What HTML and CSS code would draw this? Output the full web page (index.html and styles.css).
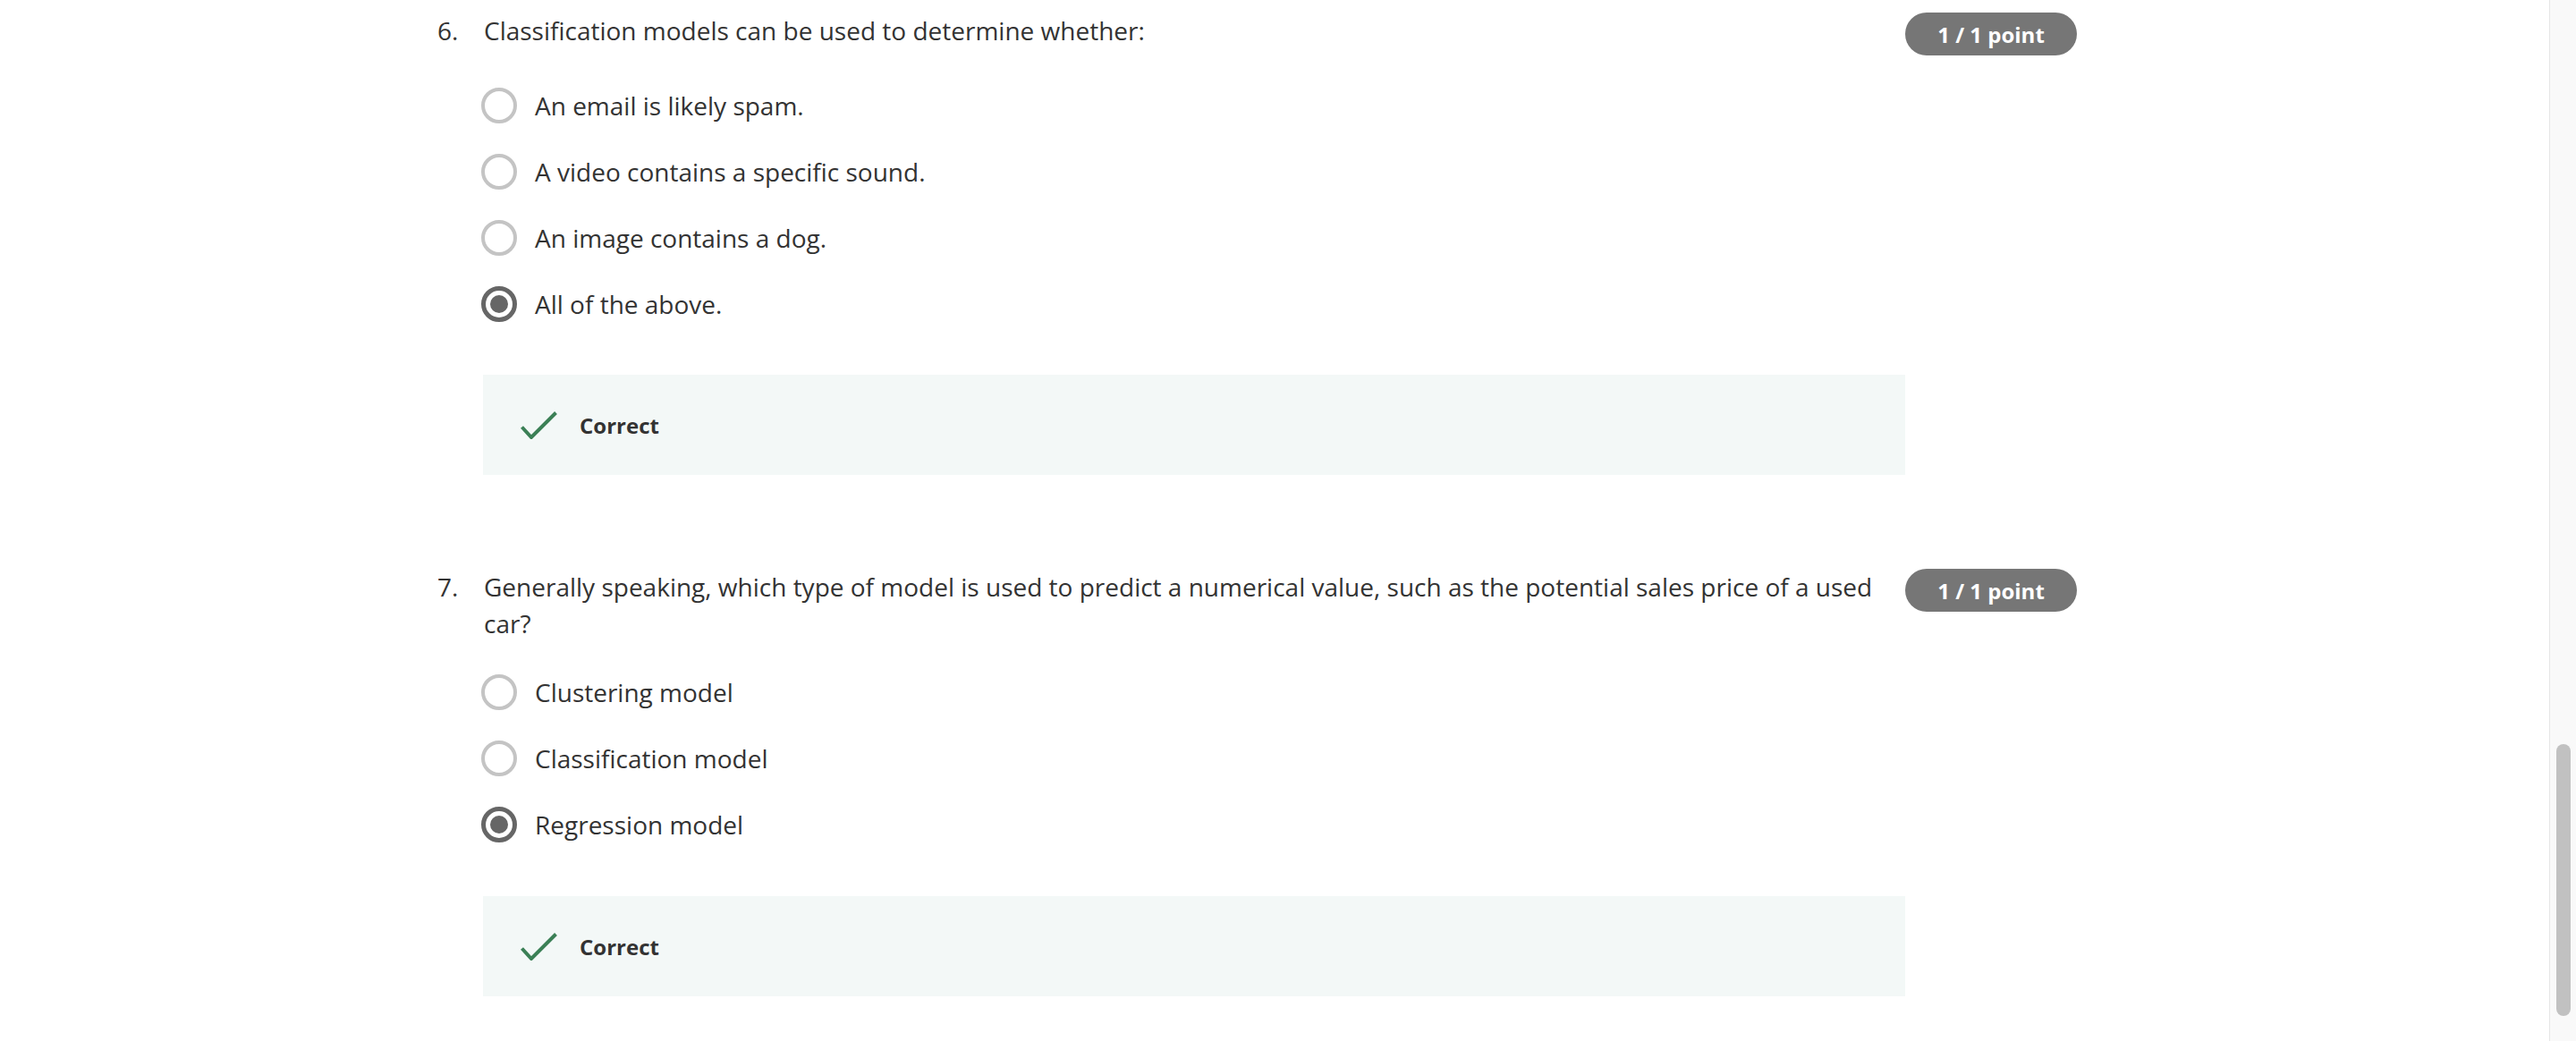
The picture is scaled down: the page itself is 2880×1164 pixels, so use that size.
FILE: index.html
```html
<!DOCTYPE html>
<html lang="en">
<head>
<meta charset="utf-8">
<title>Quiz results</title>
<link rel="stylesheet" href="styles.css">
</head>
<body>
<div class="page">
  <main class="quiz">
    <section class="question q-first">
      <span class="q-num">6.</span>
      <div class="q-body">
        <p class="q-text">Classification models can be used to determine whether:</p>
        <ul class="options">
          <li class="option"><span class="radio"></span><span class="opt-label">An email is likely spam.</span></li>
          <li class="option"><span class="radio"></span><span class="opt-label">A video contains a specific sound.</span></li>
          <li class="option"><span class="radio"></span><span class="opt-label">An image contains a dog.</span></li>
          <li class="option"><span class="radio checked"></span><span class="opt-label">All of the above.</span></li>
        </ul>
        <div class="feedback">
          <svg class="check" viewBox="0 0 41 31" width="41" height="31" aria-hidden="true"><polyline points="1.5,17.5 12,29 39.5,1.5" fill="none" stroke="#3b8056" stroke-width="4"/></svg>
          <span class="fb-text">Correct</span>
        </div>
      </div>
      <span class="badge">1 / 1 point</span>
    </section>

    <section class="question q-second">
      <span class="q-num">7.</span>
      <div class="q-body">
        <p class="q-text">Generally speaking, which type of model is used to predict a numerical value, such as the potential sales price of a used car?</p>
        <ul class="options">
          <li class="option"><span class="radio"></span><span class="opt-label">Clustering model</span></li>
          <li class="option"><span class="radio"></span><span class="opt-label">Classification model</span></li>
          <li class="option"><span class="radio checked"></span><span class="opt-label">Regression model</span></li>
        </ul>
        <div class="feedback">
          <svg class="check" viewBox="0 0 41 31" width="41" height="31" aria-hidden="true"><polyline points="1.5,17.5 12,29 39.5,1.5" fill="none" stroke="#3b8056" stroke-width="4"/></svg>
          <span class="fb-text">Correct</span>
        </div>
      </div>
      <span class="badge">1 / 1 point</span>
    </section>
  </main>
  <div class="scrollbar"><div class="thumb"></div></div>
</div>
</body>
</html>
```

FILE: styles.css
```css
* { box-sizing: border-box; }

html, body {
  margin: 0;
  padding: 0;
  height: 1164px;
  overflow: hidden;
  background: #ffffff;
  font-family: "Open Sans", "Noto Sans", "Liberation Sans", sans-serif;
  color: #333333;
}

.page {
  display: flex;
  height: 1164px;
}

.quiz {
  flex: 1;
  padding: 14px 0 0 489px;
}

.question {
  display: flex;
  align-items: flex-start;
}

.q-second {
  margin-top: 105px;
}

.q-num {
  width: 51px;
  flex: none;
  font-size: 28px;
  line-height: 41px;
}

.q-body {
  width: 1590px;
  flex: none;
}

.q-text {
  margin: 0;
  padding-left: 1px;
  font-size: 28px;
  line-height: 41px;
}

.options {
  list-style: none;
  margin: 26px 0 0;
  padding: 0;
}

.q-second .options {
  margin-top: 19px;
}

.option {
  display: flex;
  align-items: center;
  height: 74px;
}

.radio {
  width: 40px;
  height: 40px;
  flex: none;
  margin-left: -2px;
  border-radius: 50%;
  border: 4px solid #c4c4c4;
  display: flex;
  align-items: center;
  justify-content: center;
}

.radio.checked {
  border: 5px solid #666666;
}

.radio.checked::after {
  content: "";
  width: 20px;
  height: 20px;
  border-radius: 50%;
  background: #666666;
}

.opt-label {
  margin-left: 20px;
  font-size: 28px;
  line-height: 41px;
}

.feedback {
  margin-top: 42px;
  height: 112px;
  background: #f3f8f7;
  display: flex;
  align-items: center;
  padding-left: 42px;
}

.q-second .feedback {
  margin-top: 43px;
}

.check {
  flex: none;
}

.fb-text {
  margin-left: 25px;
  font-size: 24px;
  font-weight: 700;
  color: #333333;
}

.badge {
  flex: none;
  width: 192px;
  height: 48px;
  border-radius: 24px;
  background: #767676;
  color: #ffffff;
  font-size: 24px;
  font-weight: 700;
  display: flex;
  align-items: center;
  justify-content: center;
}

.scrollbar {
  width: 30px;
  flex: none;
  height: 1164px;
  background: #f9f9f9;
  border-left: 1px solid #e6e6e6;
  padding: 832px 0 0 7px;
}

.thumb {
  width: 16px;
  height: 304px;
  border-radius: 8px;
  background: #c1c1c1;
}
```
